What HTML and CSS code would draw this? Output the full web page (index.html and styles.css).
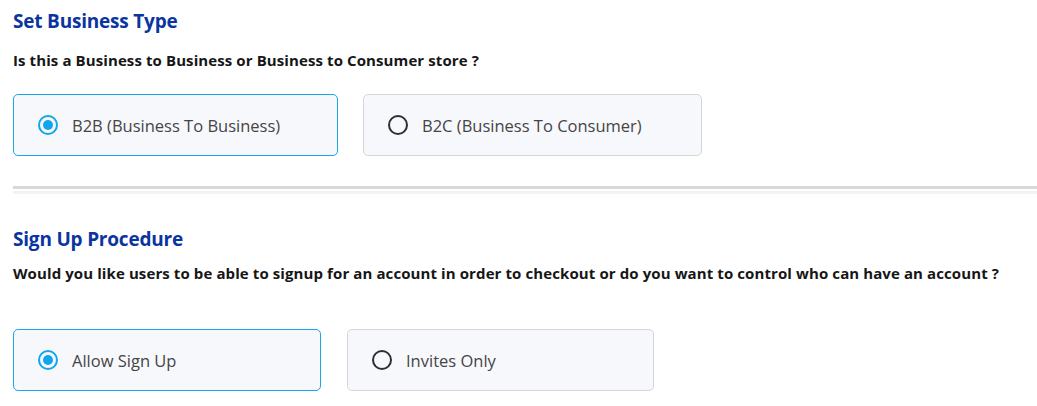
FILE: index.html
```html
<!DOCTYPE html>
<html>
<head>
<meta charset="utf-8">
<link rel="stylesheet" href="styles.css">
</head>
<body>
<div class="page">
  <section class="section">
    <h2 class="section-title">Set Business Type</h2>
    <p class="section-question">Is this a Business to Business or Business to Consumer store ?</p>
    <div class="options options-first">
      <label class="option option-selected option-b2b">
        <span class="radio radio-on"></span>
        <span class="option-label">B2B (Business To Business)</span>
      </label>
      <label class="option option-b2c">
        <span class="radio"></span>
        <span class="option-label">B2C (Business To Consumer)</span>
      </label>
    </div>
  </section>
  <div class="divider"></div>
  <section class="section">
    <h2 class="section-title title-second">Sign Up Procedure</h2>
    <p class="section-question question-second">Would you like users to be able to signup for an account in order to checkout or do you want to control who can have an account ?</p>
    <div class="options options-second">
      <label class="option option-selected option-allow">
        <span class="radio radio-on"></span>
        <span class="option-label">Allow Sign Up</span>
      </label>
      <label class="option option-invite">
        <span class="radio"></span>
        <span class="option-label">Invites Only</span>
      </label>
    </div>
  </section>
</div>
</body>
</html>
```

FILE: styles.css
```css
html, body {
  margin: 0;
  padding: 0;
  background: #ffffff;
}
body {
  font-family: "Open Sans", "Noto Sans", "Liberation Sans", sans-serif;
  color: #1b1b1b;
}
.page {
  padding: 9px 0 0 13px;
}
.section-title {
  margin: 0;
  font-size: 19px;
  line-height: 24px;
  font-weight: 700;
  color: #0a35a0;
  letter-spacing: -0.2px;
}
.title-second {
  margin-top: 38px;
}
.section-question {
  margin: 18px 0 0;
  font-size: 15px;
  line-height: 18px;
  font-weight: 700;
  color: #161616;
  letter-spacing: 0.1px;
}
.question-second {
  margin-top: 13px;
}
.options {
  display: flex;
  gap: 25px;
}
.options-first {
  margin-top: 25px;
}
.options-second {
  margin-top: 47px;
}
.option {
  box-sizing: border-box;
  height: 62px;
  display: flex;
  align-items: center;
  gap: 14px;
  padding-left: 24px;
  background: #f7f8fc;
  border: 1px solid #d5d6da;
  border-radius: 5px;
}
.option-selected {
  border-color: #1aa6e8;
}
.option-b2b { width: 325px; }
.option-b2c { width: 339px; }
.option-allow { width: 308px; }
.option-invite { width: 307px; margin-left: 1px; }
.radio {
  box-sizing: border-box;
  width: 20px;
  height: 20px;
  border-radius: 50%;
  border: 2px solid #2b2f38;
  flex: none;
  display: flex;
  align-items: center;
  justify-content: center;
}
.radio-on {
  border: 2.5px solid #12a5ef;
}
.radio-on::after {
  content: "";
  width: 10px;
  height: 10px;
  border-radius: 50%;
  background: #12a5ef;
}
.option-label {
  font-size: 16.5px;
  color: #454545;
}
.divider {
  margin-top: 30px;
  height: 3px;
  background: #d9d9dc;
  box-shadow: 0 5px 0 0 #f3f3f5;
}
```
